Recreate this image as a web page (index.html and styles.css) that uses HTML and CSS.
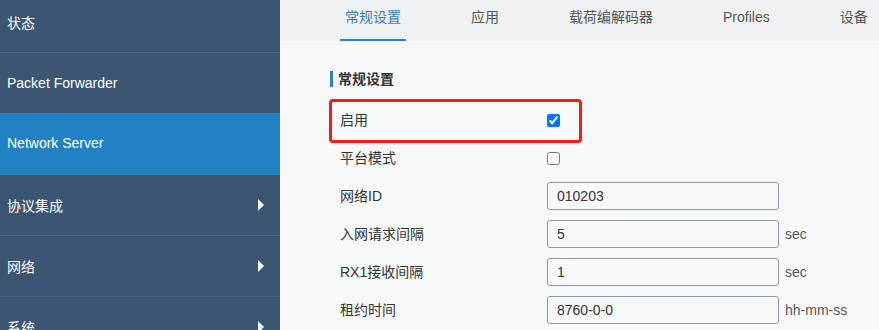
FILE: index.html
```html
<!DOCTYPE html>
<html lang="zh-CN">
<head>
<meta charset="utf-8">
<title>Network Server</title>
<link rel="stylesheet" href="styles.css">
</head>
<body>
<div class="app">
  <nav class="sidebar">
    <div class="nav-item first">状态</div>
    <div class="nav-item">Packet Forwarder</div>
    <div class="nav-item active">Network Server</div>
    <div class="nav-item has-sub">协议集成<span class="arrow"></span></div>
    <div class="nav-item has-sub">网络<span class="arrow"></span></div>
    <div class="nav-item has-sub">系统<span class="arrow"></span></div>
  </nav>
  <main class="main">
    <div class="tabs">
      <div class="tab active">常规设置</div>
      <div class="tab">应用</div>
      <div class="tab">载荷编解码器</div>
      <div class="tab">Profiles</div>
      <div class="tab">设备</div>
    </div>
    <div class="content">
      <div class="section-title">常规设置</div>
      <div class="form">
        <div class="row highlighted">
          <label class="label">启用</label>
          <input class="check" type="checkbox" checked>
        </div>
        <div class="row">
          <label class="label">平台模式</label>
          <input class="check" type="checkbox">
        </div>
        <div class="row">
          <label class="label">网络ID</label>
          <input class="field" type="text" value="010203">
        </div>
        <div class="row">
          <label class="label">入网请求间隔</label>
          <input class="field" type="text" value="5">
          <span class="unit">sec</span>
        </div>
        <div class="row">
          <label class="label">RX1接收间隔</label>
          <input class="field" type="text" value="1">
          <span class="unit">sec</span>
        </div>
        <div class="row">
          <label class="label">租约时间</label>
          <input class="field" type="text" value="8760-0-0">
          <span class="unit">hh-mm-ss</span>
        </div>
      </div>
    </div>
  </main>
</div>
</body>
</html>
```

FILE: styles.css
```css
html, body {
  margin: 0;
  padding: 0;
}
body {
  width: 879px;
  height: 330px;
  overflow: hidden;
  font-family: "Liberation Sans", "Noto Sans CJK SC", sans-serif;
  font-size: 14px;
  color: #333;
  background: #f7f8f8;
}
.app {
  display: flex;
  height: 330px;
}
.sidebar {
  width: 280px;
  flex: none;
  background: #3b5573;
  overflow: hidden;
}
.nav-item {
  position: relative;
  height: 60px;
  border-bottom: 1px solid #4a6582;
  color: #fff;
  padding-left: 7px;
  padding-bottom: 1px;
  box-sizing: border-box;
  height: 61px;
  display: flex;
  align-items: center;
}
.nav-item.first {
  margin-top: -8px;
}
.nav-item.active {
  background: #2281c2;
  border-bottom-color: #2281c2;
  height: 62px;
  margin-top: -1px;
}
.arrow {
  position: absolute;
  right: 16px;
  top: 50%;
  margin-top: -6px;
  width: 0;
  height: 0;
  border-left: 6px solid #fff;
  border-top: 6px solid transparent;
  border-bottom: 6px solid transparent;
}
.main {
  flex: 1;
  display: flex;
  flex-direction: column;
  min-width: 0;
}
.tabs {
  height: 41px;
  flex: none;
  background: #f0f1f3;
  display: flex;
  gap: 60px;
  padding-left: 60px;
  white-space: nowrap;
}
.tab {
  box-sizing: border-box;
  height: 41px;
  padding: 0 5px;
  line-height: 35px;
  color: #555;
  border-bottom: 2px solid transparent;
}
.tab.active {
  color: #3a7bb5;
  border-bottom-color: #2a83c6;
}
.content {
  padding: 30px 0 0 50px;
}
.section-title {
  border-left: 3px solid #2a83c6;
  padding-left: 5px;
  height: 16px;
  line-height: 16px;
  font-weight: bold;
  color: #333;
}
.form {
  margin-top: 14px;
  padding-left: 10px;
}
.row {
  position: relative;
  height: 38px;
  display: flex;
  align-items: center;
}
.row.highlighted::after {
  content: "";
  position: absolute;
  left: -11px;
  top: -2px;
  width: 247px;
  height: 38px;
  border: 3px solid #f21b1b;
  border-radius: 4px;
}
.label {
  width: 207px;
  flex: none;
  color: #333;
  padding-bottom: 2px;
}
.check {
  margin: 0;
  width: 13px;
  height: 13px;
}
.field {
  box-sizing: border-box;
  width: 232px;
  height: 28px;
  margin: 0;
  border: 1px solid #8e98a2;
  border-radius: 3px;
  background: #f7f8f8;
  padding: 0 9px;
  font-family: "Liberation Sans", "Noto Sans CJK SC", sans-serif;
  font-size: 14px;
  color: #333;
}
.unit {
  margin-left: 6px;
  color: #555;
}
```
